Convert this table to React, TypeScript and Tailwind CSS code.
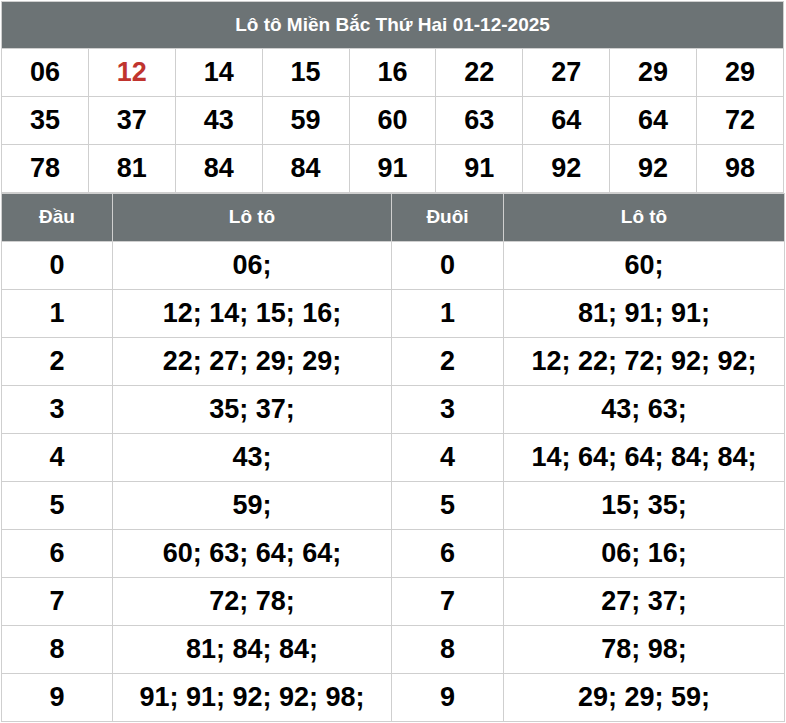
const numbers = [
  '06', '12', '14', '15', '16', '22', '27', '29', '29',
  '35', '37', '43', '59', '60', '63', '64', '64', '72',
  '78', '81', '84', '84', '91', '91', '92', '92', '98',
];

const dau = [
  '06;', '12; 14; 15; 16;', '22; 27; 29; 29;', '35; 37;', '43;',
  '59;', '60; 63; 64; 64;', '72; 78;', '81; 84; 84;', '91; 91; 92; 92; 98;',
];

const duoi = [
  '60;', '81; 91; 91;', '12; 22; 72; 92; 92;', '43; 63;', '14; 64; 64; 84; 84;',
  '15; 35;', '06; 16;', '27; 37;', '78; 98;', '29; 29; 59;',
];

const rows = [0, 1, 2];

const App = () => {
  return (
    <div className="bg-white w-[786px] h-[723px] pl-px pt-px font-['Liberation_Sans',Arial,sans-serif]">
      <table className="w-[783px] border-collapse table-fixed">
        <thead>
          <tr>
            <th
              colSpan={9}
              className="h-[47px] bg-[#6c7375] text-white text-[19px] font-bold border border-[#cfcfcf]"
            >
              Lô tô Miền Bắc Thứ Hai 01-12-2025
            </th>
          </tr>
        </thead>
        <tbody>
          {rows.map((r) => (
            <tr key={r}>
              {numbers.slice(r * 9, r * 9 + 9).map((n, i) => (
                <td
                  key={i}
                  className={`h-[48px] text-center text-[27px] font-bold border border-[#cfcfcf] ${
                    r === 0 && i === 1 ? 'text-[#c0342e]' : 'text-black'
                  }`}
                >
                  {n}
                </td>
              ))}
            </tr>
          ))}
        </tbody>
      </table>

      {/* Đầu / Đuôi */}
      <table className="w-[783px] border-collapse table-fixed">
        <colgroup>
          <col className="w-[111px]" />
          <col className="w-[279px]" />
          <col className="w-[112px]" />
          <col className="w-[281px]" />
        </colgroup>
        <thead>
          <tr className="bg-[#6c7375] text-white text-[19px] font-bold">
            <th className="h-[48px] border border-[#cfcfcf]">Đầu</th>
            <th className="h-[48px] border border-[#cfcfcf]">Lô tô</th>
            <th className="h-[48px] border border-[#cfcfcf]">Đuôi</th>
            <th className="h-[48px] border border-[#cfcfcf]">Lô tô</th>
          </tr>
        </thead>
        <tbody>
          {dau.map((d, i) => (
            <tr key={i} className="text-[27px] font-bold text-black">
              <td className="h-[48px] text-center border border-[#cfcfcf]">{i}</td>
              <td className="h-[48px] text-center border border-[#cfcfcf]">{d}</td>
              <td className="h-[48px] text-center border border-[#cfcfcf]">{i}</td>
              <td className="h-[48px] text-center border border-[#cfcfcf]">{duoi[i]}</td>
            </tr>
          ))}
        </tbody>
      </table>
    </div>
  );
};

export default App;
